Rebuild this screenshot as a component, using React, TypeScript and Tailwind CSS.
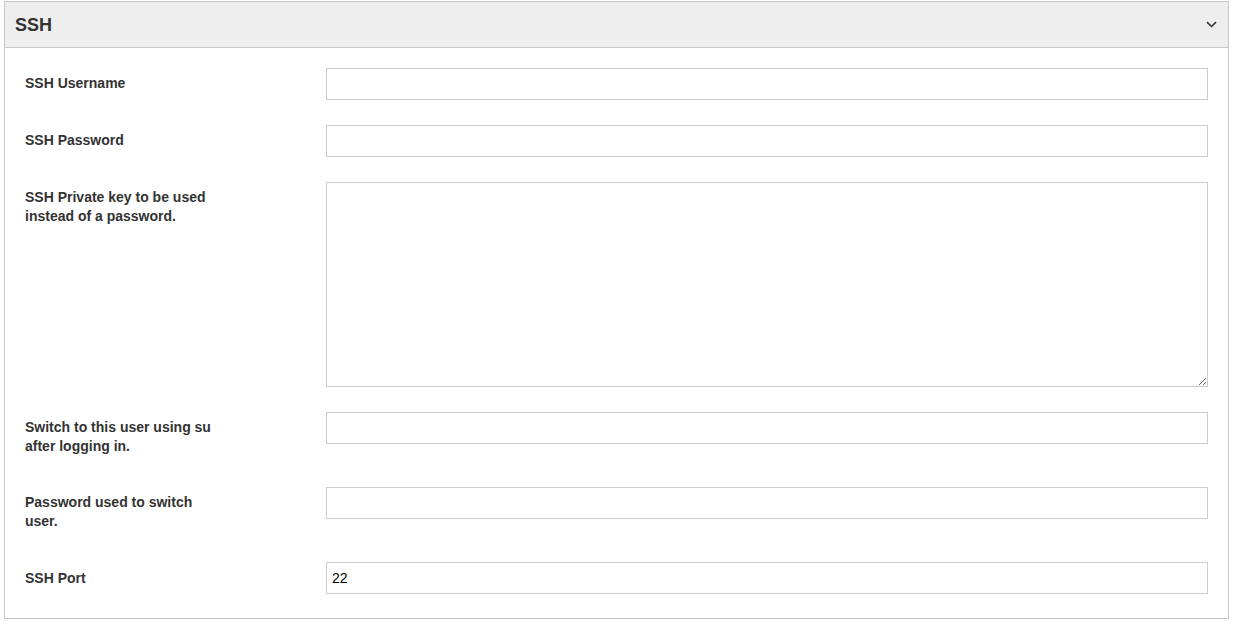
import React from 'react';

const font = { fontFamily: '"Liberation Sans", Arial, sans-serif' };

type Field = { label: string; value?: string; textarea?: boolean; pad?: string };

const fields: Field[] = [
  { label: 'SSH Username' },
  { label: 'SSH Password' },
  { label: 'SSH Private key to be used instead of a password.', textarea: true },
  { label: 'Switch to this user using su after logging in.' },
  { label: 'Password used to switch user.' },
  { label: 'SSH Port', value: '22', pad: 'pt-[7px] pb-[5px]' },
];

const App: React.FC = () => {
  return (
    <div className="bg-white w-[1235px] h-[624px] pt-px pl-[4px]" style={font}>
      <div className="w-[1225px] border border-[#c8c8c8] bg-white">
        <div className="flex items-center justify-between h-[46px] bg-[#eeeeee] border-b border-[#c8c8c8] pl-[10px] pr-[11px]">
          <h2 className="text-[18px] font-bold text-[#333333] leading-none">SSH</h2>
          <svg width="11" height="7" viewBox="0 0 11 7" fill="none">
            <path d="M1 1.2L5.5 5.5L10 1.2" stroke="#333333" strokeWidth="1.6" />
          </svg>
        </div>
        <div className="pt-[20px] pb-[24px] px-[20px] flex flex-col gap-[25px]">
          {fields.map((f) => (
            <div key={f.label} className="flex items-start">
              <div className={`w-[301px] shrink-0 ${f.pad ?? 'pt-[6px] pb-[6px]'}`}>
                <label className="block max-w-[195px] text-[14px] leading-[19px] font-bold text-[#333333]">
                  {f.label}
                </label>
              </div>
              {f.textarea ? (
                <textarea className="w-[882px] h-[205px] border border-[#cccccc] bg-white block outline-none px-[5px] py-[6px] text-[14px]" />
              ) : (
                <input
                  type="text"
                  defaultValue={f.value}
                  className="w-[882px] h-[32px] border border-[#cccccc] bg-white px-[5px] text-[14px] text-black outline-none"
                  style={font}
                />
              )}
            </div>
          ))}
        </div>
      </div>
    </div>
  );
};

export default App;
